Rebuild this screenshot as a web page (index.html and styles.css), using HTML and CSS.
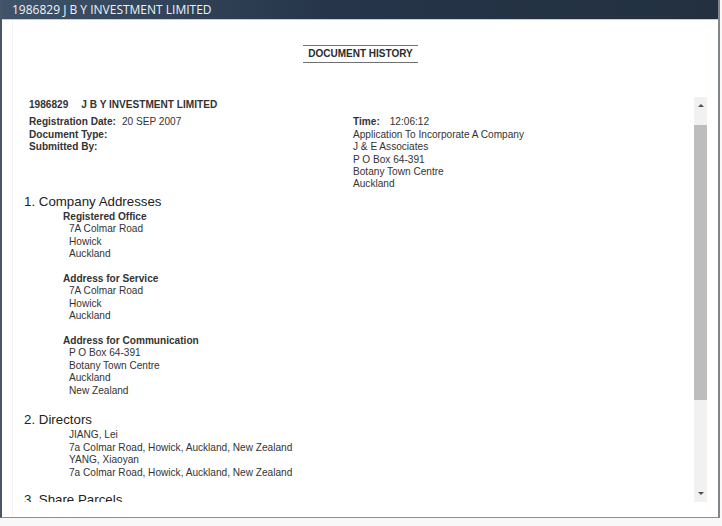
FILE: index.html
```html
<!DOCTYPE html>
<html lang="en">
<head>
  <meta charset="UTF-8" />
  <title>Document History</title>
  <link rel="stylesheet" href="styles.css">
</head>
<body>

<div class="window">
  <div class="titlebar">1986829 J B Y INVESTMENT LIMITED</div>

  <div class="content">
    <h1 class="doc-title">DOCUMENT HISTORY</h1>

    <div class="pane">
      <div class="doc">
        <div class="doc-name"><span class="doc-no">1986829</span>J B Y INVESTMENT LIMITED</div>

        <!-- Registration summary -->
        <div class="summary">
          <div>
            <div><b>Registration Date:</b><span class="val">20 SEP 2007</span></div>
            <div><b>Document Type:</b></div>
            <div><b>Submitted By:</b></div>
          </div>
          <div>
            <div><b>Time:</b><span class="val wide">12:06:12</span></div>
            <div>Application To Incorporate A Company</div>
            <div>J &amp; E Associates</div>
            <div>P O Box 64-391</div>
            <div>Botany Town Centre</div>
            <div>Auckland</div>
          </div>
        </div>

        <!-- Addresses -->
        <section class="section">
          <h2>1. Company Addresses</h2>
          <div class="group">
            <h3>Registered Office</h3>
            <div class="lines">
              <div>7A Colmar Road</div>
              <div>Howick</div>
              <div>Auckland</div>
            </div>
          </div>
          <div class="group">
            <h3>Address for Service</h3>
            <div class="lines">
              <div>7A Colmar Road</div>
              <div>Howick</div>
              <div>Auckland</div>
            </div>
          </div>
          <div class="group">
            <h3>Address for Communication</h3>
            <div class="lines">
              <div>P O Box 64-391</div>
              <div>Botany Town Centre</div>
              <div>Auckland</div>
              <div>New Zealand</div>
            </div>
          </div>
        </section>

        <!-- Directors -->
        <section class="section">
          <h2>2. Directors</h2>
          <div class="people">
            <div>JIANG, Lei</div>
            <div>7a Colmar Road, Howick, Auckland, New Zealand</div>
            <div>YANG, Xiaoyan</div>
            <div>7a Colmar Road, Howick, Auckland, New Zealand</div>
          </div>
        </section>

        <section class="section">
          <h2>3. Share Parcels</h2>
        </section>
      </div>

      <div class="scrollbar">
        <div class="sb-btn"><span class="arrow-up"></span></div>
        <div class="sb-track"><div class="sb-thumb"></div></div>
        <div class="sb-btn"><span class="arrow-down"></span></div>
      </div>
    </div>
  </div>
</div>

</body>
</html>
```

FILE: styles.css
```css
body {
  margin: 0;
  background: #f8f8f8;
  font-family: "Liberation Sans", Arial, sans-serif;
  color: #333;
}

.window {
  width: 720px;
  height: 518px;
  box-sizing: border-box;
  background: white;
  border-left: 2px solid #485664;
  border-right: 2px solid #80868b;
  border-bottom: 1px solid #8c9094;
  display: flex;
  flex-direction: column;
}

/* Title bar */
.titlebar {
  height: 20px;
  box-sizing: border-box;
  padding-left: 10px;
  background: linear-gradient(to right, #3f5369, #26354a 45%, #22303f);
  border-bottom: 1px solid #c9cdd1;
  color: #eef2f6;
  font-family: "Open Sans", sans-serif;
  font-size: 12px;
  line-height: 20px;
  white-space: nowrap;
}

.content {
  flex: 1;
  margin: 0 10px;
  border-left: 1px solid #f3f3f3;
  display: flex;
  flex-direction: column;
  align-items: center;
}

.doc-title {
  margin: 25px 0 34px;
  padding: 0 5px;
  border-top: 1px solid #707070;
  border-bottom: 1px solid #707070;
  font-size: 10px;
  font-weight: bold;
  line-height: 16px;
  color: #2b2b2b;
}

/* Scrolling document pane */
.pane {
  align-self: stretch;
  display: flex;
  height: 405px;
}

.doc {
  flex: 1;
  overflow: hidden;
  padding: 2px 0 0 11px;
  display: flex;
  flex-direction: column;
  font-size: 10.1px;
  line-height: 12.4px;
}

.doc-name {
  margin: 0 0 5px 5px;
  font-weight: bold;
}

.doc-no {
  margin-right: 13px;
}

.summary {
  margin-left: 5px;
  display: grid;
  grid-template-columns: 324px auto;
}

.val {
  margin-left: 6px;
}

.val.wide {
  margin-left: 10px;
}

.section {
  flex-shrink: 0;
}

.section h2 {
  margin: 3px 0 2px;
  font-size: 13.3px;
  font-weight: normal;
  line-height: 15px;
  color: #222;
}

.group {
  margin: 0 0 12.4px 39px;
}

.group h3 {
  margin: 0;
  font-size: 10.1px;
  font-weight: bold;
}

.lines {
  margin-left: 6px;
}

.people {
  margin: 1px 0 10px 45px;
}

/* Scrollbar */
.scrollbar {
  width: 13px;
  margin-right: 1px;
  background: #f1f1f1;
  display: flex;
  flex-direction: column;
}

.sb-btn {
  height: 17px;
  display: flex;
  align-items: center;
  justify-content: center;
}

.arrow-up,
.arrow-down {
  width: 0;
  height: 0;
  border-left: 3px solid transparent;
  border-right: 3px solid transparent;
}

.arrow-up {
  border-bottom: 3px solid #505050;
}

.arrow-down {
  border-top: 3px solid #505050;
}

.sb-track {
  flex: 1;
}

.sb-thumb {
  margin-top: 11px;
  height: 275px;
  background: #bdbdbd;
}
```
